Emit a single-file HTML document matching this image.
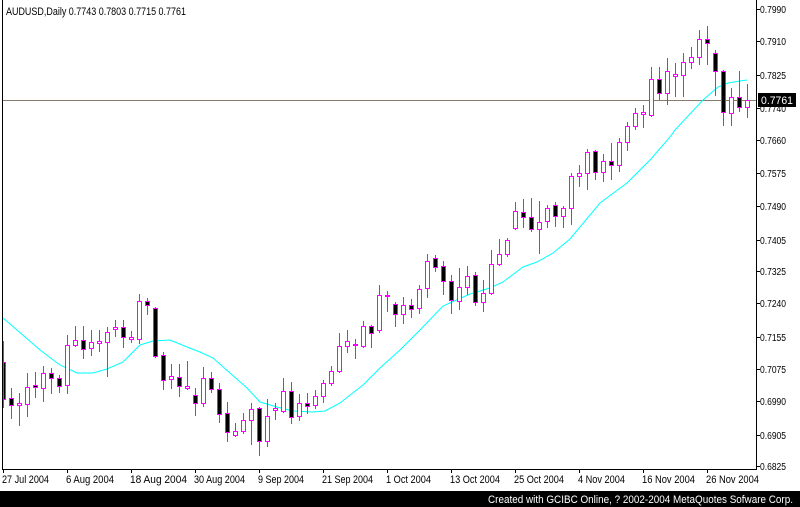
<!DOCTYPE html>
<html><head><meta charset="utf-8">
<style>
html,body{margin:0;padding:0;background:#fff;width:800px;height:507px;overflow:hidden}
svg{display:block}
text{font-family:"Liberation Sans",sans-serif;font-size:10px;fill:#000}
</style></head>
<body>
<svg id="s" width="800" height="507" xmlns="http://www.w3.org/2000/svg">
<rect x="0" y="0" width="800" height="507" fill="#fff"/>
<rect x="2" y="0" width="1" height="470" fill="#000"/>
<rect x="2" y="469" width="755" height="1" fill="#000"/>
<rect x="756" y="0" width="1" height="470" fill="#000"/>
<text x="6" y="15" textLength="180" lengthAdjust="spacingAndGlyphs" style="font-size:11px">AUDUSD,Daily  0.7743 0.7803 0.7715 0.7761</text>
<rect x="3" y="100" width="753" height="1" fill="#8c7b6b"/>
<polyline fill="none" stroke="#00ffff" stroke-width="1" points="3,318 17,330 40,350 60,365 77,373 93,373 107,369 123,362 140,345 153,341 170,340 187,347 200,352 213,358 230,373 247,388 260,402 277,407 293,411 313,412 325,411 340,403 363,385 380,368 400,350 420,330 443,306 470,294 490,288 503,282 523,267 537,262 553,253 570,239 600,203 627,183 650,160 670,137 675,130 703,100 718,87 728,83 740,81 747,80"/>
<g id="c"></g>
<g id="ax"></g>
<rect x="0" y="491" width="800" height="16" fill="#000"/>
<text x="488" y="503" textLength="305" lengthAdjust="spacingAndGlyphs" style="fill:#fff;font-size:11px">Created with GCIBC Online, ? 2002-2004 MetaQuotes Sofware Corp.</text>
</svg>
<script>
var d=[[3,341,408,362,399,1],[11,388,419,398,405,1],[19,393,426,403,405,0],[27,373,417,387,404,0],[35,372,398,385,387,1],[43,366,402,373,388,0],[51,368,394,373,378,1],[59,375,393,378,386,1],[67,335,394,345,385,0],[75,326,347,340,345,0],[83,326,359,340,349,1],[91,330,356,342,348,0],[99,330,352,341,343,0],[107,327,377,332,342,0],[115,320,337,327,329,0],[123,320,348,327,337,1],[131,331,343,337,339,0],[139,294,344,301,339,0],[147,298,315,301,305,1],[155,307,358,308,356,1],[163,352,390,355,380,1],[171,364,389,376,379,0],[179,364,397,377,386,1],[187,361,390,386,388,0],[195,388,416,395,403,1],[203,367,407,378,403,0],[211,372,393,378,389,1],[219,383,423,389,414,1],[227,402,442,413,432,1],[235,423,437,431,435,0],[243,413,434,420,431,0],[251,403,445,409,420,0],[259,407,456,408,441,1],[267,399,447,416,441,0],[275,403,420,408,410,0],[283,378,413,391,411,0],[291,382,424,391,417,1],[299,394,421,403,416,0],[307,393,414,403,406,1],[315,390,409,396,405,0],[323,380,403,383,396,0],[331,366,386,371,383,0],[339,333,373,346,371,0],[347,330,353,341,346,0],[355,339,359,344,345,0],[363,321,348,326,346,0],[371,325,348,326,333,1],[379,285,333,295,330,0],[387,291,312,295,296,0],[395,302,327,304,314,1],[403,297,324,305,314,0],[411,299,318,305,309,1],[419,285,314,289,308,0],[427,254,298,261,288,0],[435,255,272,258,267,1],[443,261,295,266,281,1],[451,275,314,281,300,1],[459,268,310,287,301,0],[467,266,295,276,287,0],[475,272,306,275,302,1],[483,280,312,293,302,0],[491,250,295,264,293,0],[499,239,266,254,264,0],[507,238,257,240,254,0],[515,202,230,211,228,0],[523,199,228,212,217,1],[531,198,232,217,229,1],[539,201,254,222,229,0],[547,205,228,208,221,0],[555,202,227,205,216,1],[563,206,228,208,216,0],[571,173,225,176,208,0],[579,165,187,173,176,0],[587,149,190,152,173,0],[595,150,180,151,172,1],[603,154,182,161,172,0],[611,143,180,161,165,1],[619,138,172,142,165,0],[627,122,151,126,142,0],[635,108,130,113,126,0],[643,105,128,112,114,0],[651,67,117,79,115,0],[659,67,100,79,93,1],[667,58,105,71,93,0],[675,63,97,74,76,0],[683,53,97,62,75,0],[691,47,69,57,62,0],[699,30,65,39,57,0],[707,26,65,39,43,1],[715,50,96,53,71,1],[723,70,126,71,112,1],[731,88,126,97,113,0],[739,71,112,97,107,1],[747,84,118,100,107,0]];
var h='';
d.forEach(function(a){var c=a[0];
h+='<rect x="'+c+'" y="'+a[1]+'" width="1" height="'+(a[2]-a[1])+'" fill="#ff00ff"/>';
var x0=Math.max(c-2,3);
h+='<rect x="'+x0+'" y="'+a[3]+'" width="'+(c+3-x0)+'" height="'+(a[4]-a[3]+1)+'" fill="#ff00ff"/>';
if(a[4]-a[3]>1)h+='<rect x="'+(x0+1)+'" y="'+(a[3]+1)+'" width="'+(c+1-x0)+'" height="'+(a[4]-a[3]-1)+'" fill="'+(a[5]?'#000':'#fff')+'"/>';
});
document.getElementById('c').innerHTML=h;
var p=[['0.7990',9],['0.7910',41],['0.7825',75],['0.7740',108],['0.7660',140],['0.7575',173],['0.7490',206],['0.7405',240],['0.7325',271],['0.7240',303],['0.7155',337],['0.7075',369],['0.6990',401],['0.6905',435],['0.6825',466]];
var g='';
p.forEach(function(a){g+='<rect x="756" y="'+a[1]+'" width="4" height="1" fill="#000"/><text x="760" y="'+(a[1]+4)+'" textLength="26" lengthAdjust="spacingAndGlyphs">'+a[0]+'</text>';});
g+='<rect x="758" y="93" width="38" height="14" fill="#000"/><text x="761" y="104" textLength="32" lengthAdjust="spacingAndGlyphs" style="fill:#fff;font-size:11px">0.7761</text>';
var t=[['27 Jul 2004',3,47],['6 Aug 2004',67,48],['18 Aug 2004',131,57],['30 Aug 2004',195,51],['9 Sep 2004',259,46],['21 Sep 2004',323,51],['1 Oct 2004',387,45],['13 Oct 2004',451,50],['25 Oct 2004',515,50],['4 Nov 2004',579,47],['16 Nov 2004',643,53],['26 Nov 2004',707,53]];
t.forEach(function(a){g+='<rect x="'+a[1]+'" y="469" width="1" height="4" fill="#000"/><text x="'+(a[1]-1)+'" y="483" textLength="'+a[2]+'" lengthAdjust="spacingAndGlyphs" style="font-size:11px">'+a[0]+'</text>';});
document.getElementById('ax').innerHTML=g;
</script>
</body></html>
